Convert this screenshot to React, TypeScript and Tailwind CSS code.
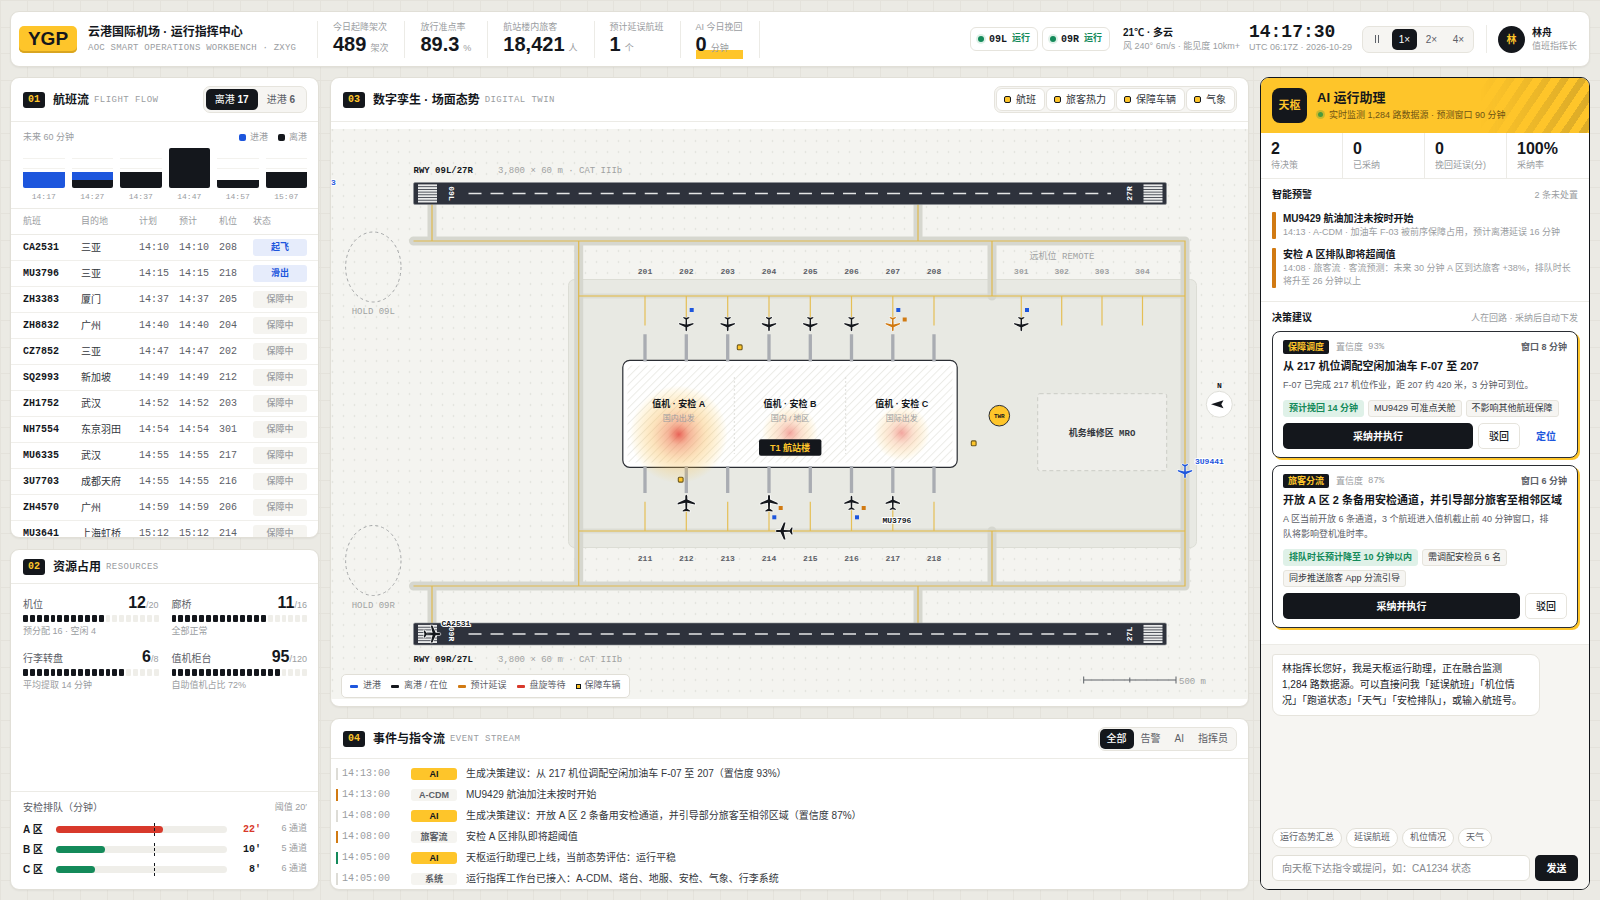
import { useState } from "react";
import clsx from "clsx";

const MONO = "font-['Liberation_Mono','Noto_Sans_CJK_SC',monospace]";

const stats = [
  { label: "今日起降架次", value: "489", unit: "架次" },
  { label: "放行准点率", value: "89.3", unit: "%" },
  { label: "航站楼内旅客", value: "18,421", unit: "人" },
  { label: "预计延误航班", value: "1", unit: "个" },
  { label: "AI 今日挽回", value: "0", unit: "分钟", highlight: true },
];

const flow = [
  { time: "14:17", arr: 2, dep: 0 },
  { time: "14:27", arr: 1, dep: 1 },
  { time: "14:37", arr: 0, dep: 2 },
  { time: "14:47", arr: 0, dep: 5 },
  { time: "14:57", arr: 0, dep: 1 },
  { time: "15:07", arr: 0, dep: 2 },
];

const flights = [
  ["CA2531", "三亚", "14:10", "14:10", "208", "起飞"],
  ["MU3796", "三亚", "14:15", "14:15", "218", "滑出"],
  ["ZH3383", "厦门", "14:37", "14:37", "205", "保障中"],
  ["ZH8832", "广州", "14:40", "14:40", "204", "保障中"],
  ["CZ7852", "三亚", "14:47", "14:47", "202", "保障中"],
  ["SQ2993", "新加坡", "14:49", "14:49", "212", "保障中"],
  ["ZH1752", "武汉", "14:52", "14:52", "203", "保障中"],
  ["NH7554", "东京羽田", "14:54", "14:54", "301", "保障中"],
  ["MU6335", "武汉", "14:55", "14:55", "217", "保障中"],
  ["3U7703", "成都天府", "14:55", "14:55", "216", "保障中"],
  ["ZH4570", "广州", "14:59", "14:59", "206", "保障中"],
  ["MU3641", "上海虹桥", "15:12", "15:12", "214", "保障中"],
];

const resources = [
  { name: "机位", used: 12, total: 20, filled: 12, note: "预分配 16 · 空闲 4" },
  { name: "廊桥", used: 11, total: 16, filled: 14, note: "全部正常" },
  { name: "行李转盘", used: 6, total: 8, filled: 15, note: "平均提取 14 分钟" },
  { name: "值机柜台", used: 95, total: 120, filled: 16, note: "自助值机占比 72%" },
];

const queues = [
  { zone: "A 区", minutes: 22, lanes: 6 },
  { zone: "B 区", minutes: 10, lanes: 5 },
  { zone: "C 区", minutes: 8, lanes: 6 },
];
const QUEUE_MAX = 35;
const QUEUE_LIMIT = 20;

const events = [
  { time: "14:13:00", tag: "AI", level: "none", text: "生成决策建议：从 217 机位调配空闲加油车 F-07 至 207（置信度 93%）" },
  { time: "14:13:00", tag: "A-CDM", level: "warn", text: "MU9429 航油加注未按时开始" },
  { time: "14:08:00", tag: "AI", level: "none", text: "生成决策建议：开放 A 区 2 条备用安检通道，并引导部分旅客至相邻区域（置信度 87%）" },
  { time: "14:08:00", tag: "旅客流", level: "warn", text: "安检 A 区排队即将超阈值" },
  { time: "14:05:00", tag: "AI", level: "ok", text: "天枢运行助理已上线，当前态势评估：运行平稳" },
  { time: "14:05:00", tag: "系统", level: "none", text: "运行指挥工作台已接入：A-CDM、塔台、地服、安检、气象、行李系统" },
];

const aiStats = [
  ["2", "待决策"],
  ["0", "已采纳"],
  ["0", "挽回延误(分)"],
  ["100%", "采纳率"],
];

const alerts = [
  { title: "MU9429 航油加注未按时开始", desc: "14:13 · A-CDM · 加油车 F-03 被前序保障占用，预计离港延误 16 分钟" },
  { title: "安检 A 区排队即将超阈值", desc: "14:08 · 旅客流 · 客流预测：未来 30 分钟 A 区到达旅客 +38%，排队时长将升至 26 分钟以上" },
];

const decisions = [
  {
    tag: "保障调度",
    confidence: "93%",
    window: "窗口 8 分钟",
    title: "从 217 机位调配空闲加油车 F-07 至 207",
    desc: "F-07 已完成 217 机位作业，距 207 约 420 米，3 分钟可到位。",
    gain: "预计挽回 14 分钟",
    notes: ["MU9429 可准点关舱", "不影响其他航班保障"],
    locate: true,
  },
  {
    tag: "旅客分流",
    confidence: "87%",
    window: "窗口 6 分钟",
    title: "开放 A 区 2 条备用安检通道，并引导部分旅客至相邻区域",
    desc: "A 区当前开放 6 条通道，3 个航班进入值机截止前 40 分钟窗口，排队将影响登机准时率。",
    gain: "排队时长预计降至 10 分钟以内",
    notes: ["需调配安检员 6 名", "同步推送旅客 App 分流引导"],
    locate: false,
  },
];

interface PanelHeadProps {
  no: string;
  title: string;
  sub: string;
  className: string;
  children?: React.ReactNode;
}

function PanelHead({ no, title, sub, className, children }: PanelHeadProps) {
  return (
    <div className={clsx("flex shrink-0 items-center border-b border-[#ecebe6] pr-[11px] pl-3", className)}>
      <span className={clsx(MONO, "flex h-4 w-[22px] items-center justify-center rounded-[3px] bg-[#14171c] text-[10px] font-bold text-[#fec52a]")}>
        {no}
      </span>
      <h2 className="ml-2 text-[12px] font-bold">{title}</h2>
      <span className={clsx(MONO, "ml-[5px] mt-[2px] text-[9px] tracking-wider text-[#9a9da1]")}>{sub}</span>
      <div className="ml-auto">{children}</div>
    </div>
  );
}

const panel = "flex min-h-0 flex-col overflow-hidden rounded-[9px] border border-[#e1dfd7] bg-white shadow-[0_1px_2px_rgba(20,23,28,0.05)]";
const group = "flex items-center rounded-[7px] border border-[#e6e4dd] bg-[#f6f5f2]";

function TopBar() {
  const [speed, setSpeed] = useState("1×");
  return (
    <header className="flex h-14 shrink-0 items-center rounded-[9px] border border-[#e1dfd7] bg-white pl-2 pr-3 shadow-[0_1px_2px_rgba(20,23,28,0.05)]">
      <div className="flex h-[27px] w-[58px] items-center justify-center rounded-[5px] bg-[#fec52a] text-[19px] font-bold shadow-[inset_0_-2px_0_#d9a520]">
        YGP
      </div>
      <div className="ml-[11px] w-[217px]">
        <h1 className="text-[12px] leading-[17px] font-bold">云港国际机场 · 运行指挥中心</h1>
        <p className={clsx(MONO, "text-[9px] leading-[14px] tracking-wide whitespace-nowrap text-[#9a9da1]")}>
          AOC SMART OPERATIONS WORKBENCH · ZXYG
        </p>
      </div>
      <dl className="ml-3 flex h-[37px] divide-x divide-[#ecebe6] border-x border-[#ecebe6]">
        {stats.map((s) => (
          <div key={s.label} className="flex flex-col justify-center pr-4 pl-[15px]">
            <dt className="text-[9px] leading-[14px] text-[#9a9da1]">{s.label}</dt>
            <dd
              className={clsx(
                "text-[20px] leading-[21px] font-bold whitespace-nowrap",
                s.highlight && "bg-[linear-gradient(transparent_65%,#fec52a_65%)]"
              )}
            >
              {s.value}
              <span className="ml-1 text-[9px] font-normal text-[#9a9da1]">{s.unit}</span>
            </dd>
          </div>
        ))}
      </dl>
      <div className="ml-auto flex items-center">
        <div className="flex gap-1">
          {["09L", "09R"].map((r) => (
            <div key={r} className="flex h-6 items-center gap-[5px] rounded-[6px] border border-[#e6e4dd] px-[7px] text-[10px] font-bold">
              <i className="h-[6px] w-[6px] rounded-full bg-[#148a5a] shadow-[0_0_0_2px_#dff1e8]" />
              <span className={MONO}>{r}</span>
              <span className="text-[9px] text-[#148a5a]">运行</span>
            </div>
          ))}
        </div>
        <div className="ml-[13px]">
          <p className="text-[10px] leading-[14px] font-bold">21℃ · 多云</p>
          <p className="text-[9px] leading-[13px] text-[#9a9da1]">风 240° 6m/s · 能见度 10km+</p>
        </div>
        <div className="ml-[9px]">
          <p className={clsx(MONO, "text-[18px] leading-[17px] font-bold")}>14:17:30</p>
          <p className="text-[9px] leading-[13px] text-[#9a9da1]">UTC 06:17Z · 2026-10-29</p>
        </div>
        <div className={clsx(group, "ml-[10px] gap-[2px] p-[2px]")}>
          {["⏸", "1×", "2×", "4×"].map((s) => (
            <button
              key={s}
              type="button"
              onClick={() => setSpeed(s)}
              className={clsx(
                "flex h-[21px] w-[25px] items-center justify-center rounded-[5px] text-[10px]",
                speed === s ? "bg-[#14171c] text-white" : "text-[#5c6067]"
              )}
            >
              {s === "⏸" ? (
                <svg viewBox="0 0 6 8" className="h-2 w-[6px]" aria-label="暂停">
                  <path d="M1.5 0V8M4.5 0V8" stroke="currentColor" strokeWidth="1" />
                </svg>
              ) : (
                s
              )}
            </button>
          ))}
        </div>
        <div className="ml-3 flex h-7 items-center border-l border-[#ecebe6] pl-[11px]">
          <span className="flex h-[27px] w-[27px] items-center justify-center rounded-full bg-[#14171c] text-[10px] font-bold text-[#fec52a]">
            林
          </span>
          <div className="ml-[7px]">
            <p className="text-[10px] leading-[14px] font-bold">林舟</p>
            <p className="text-[9px] leading-[13px] text-[#9a9da1]">值班指挥长</p>
          </div>
        </div>
      </div>
    </header>
  );
}

function FlightPanel() {
  const [dir, setDir] = useState("dep");
  return (
    <section className={panel}>
      <PanelHead no="01" title="航班流" sub="FLIGHT FLOW" className="h-11">
        <div className={clsx(group, "p-[2px] text-[10px]")}>
          {[
            { id: "dep", name: "离港", count: 17 },
            { id: "arr", name: "进港", count: 6 },
          ].map((d) => (
            <button
              key={d.id}
              type="button"
              onClick={() => setDir(d.id)}
              className={clsx(
                "h-[21px] rounded-[5px] px-[9px]",
                dir === d.id ? "bg-[#14171c] text-white" : "text-[#5c6067]"
              )}
            >
              {d.name} <b>{d.count}</b>
            </button>
          ))}
        </div>
      </PanelHead>
      <div className="shrink-0 border-b border-[#ecebe6] pt-2 pr-[11px] pb-[5px] pl-3">
        <div className="flex items-center text-[9px] leading-[14px] text-[#9a9da1]">
          <span>未来 60 分钟</span>
          <span className="ml-auto flex items-center gap-1">
            <i className="h-[7px] w-[7px] rounded-[2px] bg-[#1d56dd]" />
            进港
          </span>
          <span className="ml-[10px] flex items-center gap-1">
            <i className="h-[7px] w-[7px] rounded-[2px] bg-[#14171c]" />
            离港
          </span>
        </div>
        <div className="mt-1 grid grid-cols-6 gap-[7px]">
          {flow.map((f) => (
            <div key={f.time}>
              <div className="flex h-10 flex-col justify-end overflow-hidden rounded-[2px] bg-[linear-gradient(to_top,transparent_19px,#f3f2ee_19px,#f3f2ee_20px,transparent_20px,transparent_29px,#f3f2ee_29px,#f3f2ee_30px,transparent_30px)]">
                <i className="bg-[#1d56dd]" style={{ height: f.arr * 8 }} />
                <i className="bg-[#14171c]" style={{ height: f.dep * 8 }} />
              </div>
              <p className={clsx(MONO, "mt-[3px] text-center text-[8px] leading-3 text-[#9a9da1]")}>{f.time}</p>
            </div>
          ))}
        </div>
      </div>
      <table className="w-full table-fixed text-left text-[10px]">
        <colgroup>
          <col className="w-[70px]" />
          <col className="w-[58px]" />
          <col className="w-[40px]" />
          <col className="w-[40px]" />
          <col className="w-[34px]" />
          <col />
        </colgroup>
        <thead>
          <tr className="h-[25px] border-b border-[#ecebe6] text-[9px] text-[#9a9da1]">
            <th className="pl-3 font-normal">航班</th>
            <th className="font-normal">目的地</th>
            <th className="font-normal">计划</th>
            <th className="font-normal">预计</th>
            <th className="font-normal">机位</th>
            <th className="font-normal">状态</th>
          </tr>
        </thead>
        <tbody>
          {flights.map(([no, city, plan, est, stand, state]) => (
            <tr key={no} className="h-[26px] border-b border-[#f0efeb]">
              <td className={clsx(MONO, "pl-3 font-bold")}>{no}</td>
              <td className="text-[#33373d]">{city}</td>
              <td className={clsx(MONO, "text-[#5c6067]")}>{plan}</td>
              <td className={clsx(MONO, "text-[#5c6067]")}>{est}</td>
              <td className={clsx(MONO, "text-[#5c6067]")}>{stand}</td>
              <td className="pr-[11px]">
                <span
                  className={clsx(
                    "block h-[17px] rounded-[3px] text-center text-[9px] leading-[17px]",
                    state === "保障中" ? "bg-[#f5f4f0] font-medium text-[#9a9da1]" : "bg-[#e6ecfb] font-bold text-[#1d56dd]"
                  )}
                >
                  {state}
                </span>
              </td>
            </tr>
          ))}
        </tbody>
      </table>
    </section>
  );
}

function ResourcePanel() {
  return (
    <section className={panel}>
      <PanelHead no="02" title="资源占用" sub="RESOURCES" className="h-[34px]" />
      <div className="grid grid-cols-2 gap-x-[13px] gap-y-[9px] pt-[9px] pr-[11px] pl-3">
        {resources.map((r) => (
          <div key={r.name}>
            <div className="flex items-baseline justify-between">
              <span className="text-[10px] leading-5 text-[#5c6067]">{r.name}</span>
              <span className="text-[16px] leading-5 font-bold">
                {r.used}
                <span className="text-[9px] font-normal text-[#9a9da1]">/{r.total}</span>
              </span>
            </div>
            <div className="flex h-[7px] gap-[2px]">
              {Array.from({ length: 20 }, (_, i) => (
                <i key={i} className={clsx("flex-1 rounded-[1px]", i < r.filled ? "bg-[#14171c]" : "bg-[#efeee9]")} />
              ))}
            </div>
            <p className="mt-[3px] text-[9px] leading-[13px] text-[#9a9da1]">{r.note}</p>
          </div>
        ))}
      </div>
      <div className="mt-auto border-t border-[#ecebe6] pt-2 pr-[11px] pb-[10px] pl-3">
        <div className="flex items-center justify-between leading-[15px]">
          <span className="text-[10px] text-[#5c6067]">安检排队（分钟）</span>
          <span className="text-[9px] text-[#9a9da1]">阈值 20′</span>
        </div>
        <div className="mt-1">
          {queues.map((q) => (
            <div key={q.zone} className="grid h-5 grid-cols-[33px_1fr_34px_46px] items-center">
              <b className="text-[10px]">{q.zone}</b>
              <div className="relative h-[7px] rounded-full bg-[#efeee9]">
                <div
                  className={clsx("h-full rounded-full", q.minutes > QUEUE_LIMIT ? "bg-[#d8392b]" : "bg-[#148a5a]")}
                  style={{ width: `${(q.minutes / QUEUE_MAX) * 100}%` }}
                />
                <i
                  className="absolute -top-[3px] h-[13px] border-l border-dashed border-[#14171c]"
                  style={{ left: `${(QUEUE_LIMIT / QUEUE_MAX) * 100}%` }}
                />
              </div>
              <b className={clsx(MONO, "text-right text-[10px]", q.minutes > QUEUE_LIMIT && "text-[#d8392b]")}>{q.minutes}′</b>
              <span className="text-right text-[9px] text-[#9a9da1]">{q.lanes} 通道</span>
            </div>
          ))}
        </div>
      </div>
    </section>
  );
}

const INK = "#14171c";
const PLANE =
  "M0 -8.6C.7 -8.6 1 -7.6 1 -6.6V-3.8L8.6 -.4V1.2L1 -.6L.8 5.4L3.6 7.2V8.3L0 7.6L-3.6 8.3V7.2L-.8 5.4L-1 -.6L-8.6 1.2V-.4L-1 -3.8V-6.6C-1 -7.6 -.7 -8.6 0 -8.6Z";

function Plane({ x, y, r = 0, s = 1, color = INK }: { x: number; y: number; r?: number; s?: number; color?: string }) {
  return (
    <path
      d={PLANE}
      transform={`translate(${x} ${y}) rotate(${r}) scale(${s})`}
      fill={color}
      stroke="#fff"
      strokeWidth="1.4"
      strokeOpacity="0.8"
      paintOrder="stroke"
    />
  );
}

function Runway({ y, left, right }: { y: number; left: string; right: string }) {
  return (
    <g>
      <rect x="82.5" y={y} width="753" height="22" rx="1.5" fill="#2e323c" stroke="#8d9096" strokeWidth=".6" />
      {[87, 812.5].map((x) =>
        [0, 1, 2, 3, 4, 5, 6].map((i) => (
          <rect key={`${x}-${i}`} x={x} y={y + 1.9 + i * 2.7} width="19" height="1.9" fill="#e9eaea" />
        ))
      )}
      <path d={`M137.5 ${y + 11}H780`} stroke="#e4e5e5" strokeWidth="1.3" strokeDasharray="13 9.03" />
      <g className={MONO} fontSize="8" fontWeight="700" fill="#fff" textAnchor="middle">
        <text transform={`translate(117.5 ${y + 11}) rotate(90)`}>{left}</text>
        <text transform={`translate(800.5 ${y + 11}) rotate(-90)`}>{right}</text>
      </g>
    </g>
  );
}

const standX = [314, 355.3, 396.7, 438, 479.3, 520.5, 561.8, 603];
const remoteX = [690.3, 730.7, 771, 811.5];
const TAXI = "M82.5 112H854V457H82.5M247.7 112V457M661 112V167M661 402V457M101 75V112M101 457V494M587 75V112M587 457V494";

function AirfieldMap() {
  return (
    <svg viewBox="0 1 917 568" className="h-full w-full" role="img" aria-label="场面态势图">
      <defs>
        <pattern id="dots" x="-4" y="-4.5" width="11" height="11" patternUnits="userSpaceOnUse">
          <circle cx="5.5" cy="5.5" r=".8" fill="#d8d9d2" />
        </pattern>
        <pattern id="hatch" width="5.5" height="5.5" patternUnits="userSpaceOnUse" patternTransform="rotate(45)">
          <path d="M.5 0V5.5" stroke="#ebebe7" strokeWidth="1" />
        </pattern>
        <radialGradient id="hot">
          <stop offset="0" stopColor="#e5483c" stopOpacity=".85" />
          <stop offset=".22" stopColor="#ee7a48" stopOpacity=".55" />
          <stop offset=".55" stopColor="#f9bd5e" stopOpacity=".4" />
          <stop offset="1" stopColor="#fec52a" stopOpacity="0" />
        </radialGradient>
        <radialGradient id="warm">
          <stop offset="0" stopColor="#ea6a60" stopOpacity=".6" />
          <stop offset=".4" stopColor="#f5a878" stopOpacity=".35" />
          <stop offset="1" stopColor="#fec52a" stopOpacity="0" />
        </radialGradient>
      </defs>
      <rect width="918" height="570" fill="#f4f4f0" />
      <rect width="918" height="570" fill="url(#dots)" />

      <rect x="237.5" y="150.5" width="628" height="268" rx="6" fill="#e8e9e3" stroke="#dcddd5" />
      <path d="M247.7 167H854M247.7 402H854" stroke="#dcddd5" strokeWidth="5" />
      <path d={TAXI} fill="none" stroke="#d6d7cf" strokeWidth="9" strokeLinecap="round" strokeLinejoin="round" />
      <path d={TAXI} fill="none" stroke="#dfb94c" strokeWidth="1.2" />
      <path d="M247.7 167H854M247.7 402H854" stroke="#e3b93f" strokeWidth="1.2" />
      <g stroke="#e5bf55" strokeWidth="1.2">
        {[...standX, ...remoteX].map((x) => (
          <path key={x} d={`M${x} 167V196.5`} />
        ))}
        {standX.map((x) => (
          <path key={x} d={`M${x} 372.7V402`} />
        ))}
      </g>

      <Runway y={53.5} left="09L" right="27R" />
      <Runway y={494} left="09R" right="27L" />

      <g className={MONO} fontSize="9">
        <text x="82.5" y="44" fontWeight="700" fill={INK}>RWY 09L/27R</text>
        <text x="167" y="44" fill="#a0a2a2">3,800 × 60 m · CAT IIIb</text>
        <text x="82.5" y="533" fontWeight="700" fill={INK}>RWY 09R/27L</text>
        <text x="167" y="533" fill="#a0a2a2">3,800 × 60 m · CAT IIIb</text>
        <g fill="none" stroke="#a5a7a8" strokeDasharray="3 3">
          <ellipse cx="42.3" cy="138" rx="27.7" ry="35" />
          <ellipse cx="42.3" cy="431.5" rx="27.7" ry="35" />
        </g>
        <g fill="#a0a2a2" textAnchor="middle">
          <text x="42.3" y="185">HOLD 09L</text>
          <text x="42.3" y="479">HOLD 09R</text>
          <text x="731" y="130">远机位 REMOTE</text>
        </g>
        <text x="848" y="555" fill="#a0a2a2">500 m</text>
      </g>
      <path d="M752.7 551H845M752.7 547.5V554.5M845 547.5V554.5M798.8 548.5V553.5" stroke="#5c6067" fill="none" />

      <g className={MONO} fontSize="8" fontWeight="700" textAnchor="middle" fill="#5c6067">
        {standX.map((x, i) => (
          <g key={x}>
            <text x={x} y="145">{201 + i}</text>
            <text x={x} y="431.5">{211 + i}</text>
          </g>
        ))}
        {remoteX.map((x, i) => (
          <text key={x} x={x} y="145" fill="#9c9ea0">{301 + i}</text>
        ))}
      </g>

      <rect x="291.8" y="231.3" width="334.4" height="107" rx="7" fill="#fff" stroke="#2a2d33" strokeWidth="1.2" />
      <rect x="296.5" y="236.5" width="325" height="97" rx="3" fill="url(#hatch)" />
      <path d="M403.3 248V325M514.7 248V325" stroke="#dededa" strokeDasharray="2 2" />
      <path
        d={standX.map((x) => `M${x} 205.3V232.5M${x} 337V364`).join("")}
        stroke="#a9acb2"
        strokeWidth="3.3"
      />
      <circle cx="347.7" cy="305.3" r="49" fill="url(#hot)" />
      <circle cx="459" cy="304" r="28" fill="url(#warm)" />
      <circle cx="570.7" cy="304" r="28" fill="url(#warm)" />
      <g textAnchor="middle">
        <g fontSize="9" fontWeight="700" fill={INK}>
          <text x="347.7" y="277.5">值机 · 安检 A</text>
          <text x="459" y="277.5">值机 · 安检 B</text>
          <text x="570.7" y="277.5">值机 · 安检 C</text>
        </g>
        <g fontSize="8" fill="#9a9da1">
          <text x="347.7" y="292">国内出发</text>
          <text x="459" y="292">国内 / 地区</text>
          <text x="570.7" y="292">国际出发</text>
        </g>
        <rect x="428" y="310.3" width="62.4" height="16.4" rx="2" fill={INK} />
        <text x="459" y="321.8" fontSize="9" fontWeight="700" fill="#fec52a">T1 航站楼</text>
      </g>

      <rect x="706.7" y="264.7" width="129" height="77" rx="2" fill="#eeeeea" stroke="#cbccc5" strokeDasharray="4 3" />
      <text x="771" y="307" className={MONO} fontSize="9" fontWeight="700" textAnchor="middle" fill="#33373d">机务维修区 MRO</text>
      <circle cx="668.3" cy="286.7" r="10.3" fill="#fec52a" stroke="#2a2d33" />
      <text x="668.3" y="289" className={MONO} fontSize="6" fontWeight="700" textAnchor="middle" fill={INK}>TWR</text>

      <circle cx="888.3" cy="275.3" r="13" fill="#fff" stroke="#dfdfd9" />
      <path d="M880 275.3L892.5 271.3L890.3 275.3L892.5 279.3Z" fill={INK} />
      <text x="888.3" y="259" className={MONO} fontSize="8" fontWeight="700" textAnchor="middle" fill={INK}>N</text>

      {[[408.7, 218.3], [349.7, 350.7], [642.7, 314.3]].map(([x, y]) => (
        <rect key={x} x={x - 2.4} y={y - 2.4} width="4.8" height="4.8" rx="1" fill="#fec52a" stroke="#6f5a1c" strokeWidth="1.1" />
      ))}
      {[[360.7, 181], [567.3, 181], [696, 181], [443.3, 388.3], [526, 388.3]].map(([x, y]) => (
        <rect key={x} x={x - 2} y={y - 2} width="4" height="4" fill="#1d56dd" />
      ))}
      {[[573.7, 190.5], [449.7, 379], [532.7, 379]].map(([x, y]) => (
        <rect key={x} x={x - 2} y={y - 2} width="4" height="4" fill="#d17a12" />
      ))}

      {standX.slice(1, 6).map((x) => (
        <Plane key={x} x={x} y={195} r={180} s={0.83} />
      ))}
      <Plane x={561.8} y={195} r={180} s={0.83} color="#d17a12" />
      <Plane x={690.3} y={195} r={180} s={0.83} />
      <Plane x={355.3} y={374.3} />
      <Plane x={438} y={374.3} />
      <Plane x={520.5} y={374} s={0.83} />
      <Plane x={561.8} y={374} s={0.83} />
      <Plane x={453.3} y={402} r={-90} />
      <Plane x={854} y={342} r={180} s={0.83} color="#1d56dd" />
      <Plane x={101} y={505} r={90} />

      <g className={MONO} fontSize="8" fontWeight="700" fill={INK} stroke="#fff" strokeWidth="2" paintOrder="stroke">
        <text x="110.5" y="496.5">CA2531</text>
        <text x="551.5" y="394">MU3796</text>
        <text x="864" y="335" fill="#1d56dd">3U9441</text>
        <text x="0" y="56" fill="#1d56dd">3</text>
      </g>
    </svg>
  );
}

function TwinPanel() {
  const [layers, setLayers] = useState(["航班", "旅客热力", "保障车辆", "气象"]);
  const toggle = (name: string) =>
    setLayers((prev) => (prev.includes(name) ? prev.filter((l) => l !== name) : [...prev, name]));
  return (
    <section className={panel}>
      <PanelHead no="03" title="数字孪生 · 场面态势" sub="DIGITAL TWIN" className="h-11">
        <div className={clsx(group, "gap-[1px] p-[1px]")}>
          {["航班", "旅客热力", "保障车辆", "气象"].map((name) => (
            <button
              key={name}
              type="button"
              onClick={() => toggle(name)}
              className="flex h-[23px] items-center gap-[5px] rounded-[6px] border border-[#e6e4dd] bg-white pr-2 pl-[7px] text-[10px] text-[#33373d]"
            >
              <i className={clsx("h-[7px] w-[7px] rounded-[2px] border border-[#14171c]", layers.includes(name) && "bg-[#fec52a]")} />
              {name}
            </button>
          ))}
        </div>
      </PanelHead>
      <div className="relative min-h-0 flex-1">
        <AirfieldMap />
        <div className="absolute bottom-2 left-[10px] flex h-6 items-center gap-[10px] rounded-[5px] border border-[#e1dfd7] bg-white px-2 text-[9px] text-[#5c6067]">
          <span className="flex items-center gap-[5px]"><i className="h-[3px] w-2 rounded-[1px] bg-[#1d56dd]" />进港</span>
          <span className="flex items-center gap-[5px]"><i className="h-[3px] w-2 rounded-[1px] bg-[#14171c]" />离港 / 在位</span>
          <span className="flex items-center gap-[5px]"><i className="h-[3px] w-2 rounded-[1px] bg-[#d17a12]" />预计延误</span>
          <span className="flex items-center gap-[5px]"><i className="h-[3px] w-2 rounded-[1px] bg-[#d8392b]" />盘旋等待</span>
          <span className="flex items-center gap-1"><i className="h-[5px] w-[5px] border border-[#14171c] bg-[#fec52a]" />保障车辆</span>
        </div>
      </div>
    </section>
  );
}

function EventPanel() {
  const [filter, setFilter] = useState("全部");
  return (
    <section className={panel}>
      <PanelHead no="04" title="事件与指令流" sub="EVENT STREAM" className="h-10">
        <div className={clsx(group, "p-[1px] text-[10px]")}>
          {["全部", "告警", "AI", "指挥员"].map((f) => (
            <button
              key={f}
              type="button"
              onClick={() => setFilter(f)}
              className={clsx("h-5 rounded-[5px] px-[7px]", filter === f ? "bg-[#14171c] font-medium text-white" : "text-[#5c6067]")}
            >
              {f}
            </button>
          ))}
        </div>
      </PanelHead>
      <ul className="pt-1">
        {events.map((e, i) => (
          <li key={i} className="flex h-[21px] items-center pl-[5px]">
            <i
              className={clsx(
                "h-3 w-[2px]",
                e.level === "warn" ? "bg-[#d17a12]" : e.level === "ok" ? "bg-[#148a5a]" : "bg-[#dddcd6]"
              )}
            />
            <time className={clsx(MONO, "ml-1 w-[69px] text-[10px] text-[#9a9da1]")}>{e.time}</time>
            <span
              className={clsx(
                "h-3 w-[46px] rounded-[3px] text-center text-[9px] leading-3 font-bold",
                e.tag === "AI" ? "bg-[#fec52a]" : "bg-[#f5f4f0] text-[#5c6067]"
              )}
            >
              {e.tag}
            </span>
            <span className="ml-[9px] text-[10px] text-[#33373d]">{e.text}</span>
          </li>
        ))}
      </ul>
    </section>
  );
}

function AssistantPanel() {
  return (
    <aside className="flex min-h-0 flex-col overflow-hidden rounded-[9px] border border-[#14171c] bg-white">
      <div className="relative flex h-[55px] shrink-0 items-center bg-[#fec52a]">
        <span className="ml-[11px] flex h-[35px] w-[35px] items-center justify-center rounded-[8px] bg-[#14171c] text-[11px] font-bold text-[#fec52a]">
          天枢
        </span>
        <div className="ml-[10px]">
          <h2 className="text-[13px] leading-[18px] font-bold">AI 运行助理</h2>
          <p className="flex items-center text-[9px] leading-4 text-[#6e5414]">
            <i className="mr-[6px] ml-[1px] h-[5px] w-[5px] rounded-full bg-[#4a9a3c] shadow-[0_0_0_2px_rgba(74,154,60,0.3)]" />
            实时监测 1,284 路数据源 · 预测窗口 90 分钟
          </p>
        </div>
        <div className="absolute inset-y-0 right-0 w-[110px] bg-[repeating-linear-gradient(124deg,transparent_0,transparent_8px,rgba(20,23,28,0.15)_8px,rgba(20,23,28,0.15)_15px)] [mask-image:linear-gradient(to_right,transparent,black)]" />
      </div>
      <dl className="grid h-[46px] shrink-0 grid-cols-4 divide-x divide-[#ecebe6] border-b border-[#ecebe6]">
        {aiStats.map(([value, label]) => (
          <div key={label} className="flex flex-col-reverse justify-center pl-[10px]">
            <dt className="text-[9px] leading-[14px] text-[#9a9da1]">{label}</dt>
            <dd className="text-[16px] leading-[18px] font-bold">{value}</dd>
          </div>
        ))}
      </dl>
      <div className="shrink-0 border-b border-[#ecebe6] px-[11px] pt-2 pb-[13px]">
        <div className="flex items-center justify-between leading-4">
          <h3 className="text-[10px] font-bold">智能预警</h3>
          <span className="text-[9px] text-[#9a9da1]">2 条未处置</span>
        </div>
        <ul className="mt-[9px] flex flex-col gap-[9px]">
          {alerts.map((a) => (
            <li key={a.title} className="flex gap-[7px]">
              <i className="w-1 shrink-0 rounded-[1px] bg-[#d17a12]" />
              <div>
                <p className="text-[10px] leading-[14px] font-bold">{a.title}</p>
                <p className="text-[9px] leading-[13px] text-[#9a9da1]">{a.desc}</p>
              </div>
            </li>
          ))}
        </ul>
      </div>
      <div className="shrink-0 border-b border-[#ecebe6] px-[11px] pt-2 pb-4">
        <div className="flex items-center justify-between leading-4">
          <h3 className="text-[10px] font-bold">决策建议</h3>
          <span className="text-[9px] text-[#9a9da1]">人在回路 · 采纳后自动下发</span>
        </div>
        <div className="mt-[5px] flex flex-col gap-[7px]">
          {decisions.map((d) => (
            <article key={d.tag} className="rounded-[8px] border border-[#2a2d33] bg-white px-[10px] py-2 shadow-[2px_2px_0_#fec52a]">
              <div className="flex items-center text-[9px] leading-[14px]">
                <span className="rounded-[2px] bg-[#14171c] px-[5px] font-bold text-[#fec52a]">{d.tag}</span>
                <span className="ml-[7px] text-[#9a9da1]">置信度</span>
                <span className={clsx(MONO, "ml-[5px] text-[#9a9da1]")}>{d.confidence}</span>
                <span className="ml-auto font-bold text-[#5c6067]">{d.window}</span>
              </div>
              <h4 className="mt-1 text-[11px] leading-4 font-bold whitespace-nowrap">{d.title}</h4>
              <p className="mt-1 pr-4 text-[9px] leading-[15px] text-[#5c6067]">{d.desc}</p>
              <div className="mt-[7px] flex flex-wrap gap-1 text-[9px] leading-[15px]">
                <span className="rounded-[3px] border border-[#dff1e8] bg-[#dff1e8] px-[5px] font-bold text-[#148a5a]">{d.gain}</span>
                {d.notes.map((n) => (
                  <span key={n} className="rounded-[3px] border border-[#e6e4dd] bg-[#f6f5f2] px-[5px] text-[#33373d]">{n}</span>
                ))}
              </div>
              <div className="mt-[6px] flex gap-[5px] text-[10px] font-bold">
                <button type="button" className="h-[26px] flex-1 rounded-[5px] bg-[#14171c] text-white">采纳并执行</button>
                <button type="button" className="h-[26px] w-[42px] rounded-[5px] border border-[#e6e4dd] bg-white font-medium">驳回</button>
                {d.locate && (
                  <button type="button" className="h-[26px] w-[42px] text-[#1d56dd]">定位</button>
                )}
              </div>
            </article>
          ))}
        </div>
      </div>
      <div className="flex min-h-0 flex-1 flex-col bg-[#f6f5f2] px-[11px] pt-[9px] pb-2">
        <p className="w-[268px] rounded-[9px] rounded-tl-[3px] border border-[#e6e4dd] bg-white py-[6px] pr-4 pl-[9px] text-[10px] leading-4 text-[#22252b]">
          林指挥长您好，我是天枢运行助理，正在融合监测 1,284 路数据源。可以直接问我「延误航班」「机位情况」「跑道状态」「天气」「安检排队」，或输入航班号。
        </p>
        <div className="mt-auto flex gap-1">
          {["运行态势汇总", "延误航班", "机位情况", "天气"].map((t) => (
            <button key={t} type="button" className="h-5 rounded-full border border-[#e1dfd7] bg-white px-[7px] text-[9px] text-[#5c6067]">
              {t}
            </button>
          ))}
        </div>
        <form className="mt-[7px] flex gap-[5px]" onSubmit={(e) => e.preventDefault()}>
          <input
            aria-label="向天枢提问"
            placeholder="向天枢下达指令或提问，如：CA1234 状态"
            className="h-[26px] min-w-0 flex-1 rounded-[6px] border border-[#e1dfd7] bg-white px-[9px] text-[10px] placeholder:text-[#85888c]"
          />
          <button type="submit" className="h-[26px] w-[43px] rounded-[5px] bg-[#14171c] text-[10px] font-bold text-white">发送</button>
        </form>
      </div>
    </aside>
  );
}

export default function App() {
  return (
    <div className="flex h-screen flex-col gap-[10px] bg-[#ebeae4] bg-[linear-gradient(to_right,#e4e2db_1px,transparent_1px,transparent_27px,#e4e2db_27px,#e4e2db_28px,transparent_28px,transparent_53px,#e4e2db_53px,#e4e2db_54px,transparent_54px),linear-gradient(to_bottom,#e4e2db_1px,transparent_1px,transparent_27px,#e4e2db_27px,#e4e2db_28px,transparent_28px,transparent_53px,#e4e2db_53px,#e4e2db_54px,transparent_54px)] bg-[length:80px_80px] px-[10px] pt-[11px] pb-[10px] font-['Liberation_Sans','Noto_Sans_CJK_SC',sans-serif] text-[#14171c]">
      <TopBar />
      <main className="grid min-h-0 flex-1 grid-cols-[309px_1fr_330px] gap-[11px]">
        <div className="grid min-h-0 grid-rows-[1fr_341px] gap-[11px]">
          <FlightPanel />
          <ResourcePanel />
        </div>
        <div className="grid min-h-0 min-w-0 grid-rows-[1fr_172px] gap-[11px]">
          <TwinPanel />
          <EventPanel />
        </div>
        <AssistantPanel />
      </main>
    </div>
  );
}
